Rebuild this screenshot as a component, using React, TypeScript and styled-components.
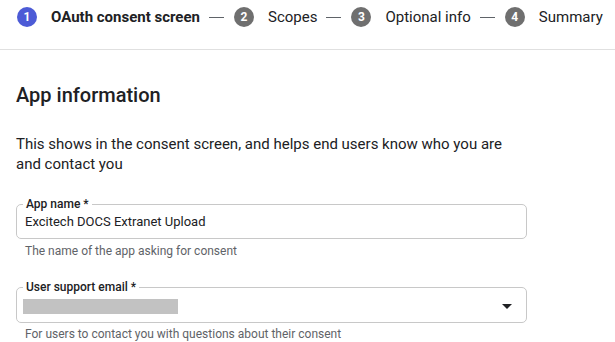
import React from "react";
import styled, { createGlobalStyle } from "styled-components";

const Global = createGlobalStyle`
  html, body { margin: 0; padding: 0; background: #fff; }
  body { font-family: Roboto, "Noto Sans", Arial, sans-serif; color: #202124; }
  * { box-sizing: border-box; }
`;

const Page = styled.div`
  width: 615px;
  height: 342px;
  overflow: hidden;
  background: #fff;
`;

const Stepper = styled.nav`
  display: flex;
  align-items: center;
  height: 50px;
  padding: 7px 0 22px 17px;
  border-bottom: 1px solid #e0e0e0;
`;

const Step = styled.div`
  display: flex;
  align-items: center;
  gap: 14px;
  height: 20px;
`;

const StepNum = styled.span<{ $active?: boolean }>`
  width: 20px;
  height: 20px;
  border-radius: 50%;
  background: ${(p) => (p.$active ? "#4c5bd6" : "#6f6f6f")};
  color: #fff;
  font-size: 12px;
  font-weight: 700;
  display: flex;
  align-items: center;
  justify-content: center;
  line-height: 1;
`;

const StepLabel = styled.span<{ $active?: boolean }>`
  font-size: 15px;
  line-height: 20px;
  font-weight: ${(p) => (p.$active ? 700 : 400)};
  color: #202124;
  white-space: nowrap;
`;

const Dash = styled.span`
  width: 15px;
  height: 1px;
  background: #5f6368;
  margin: 1px 10px 0 9px;
`;

const Content = styled.main`
  padding: 31px 16px 0 16px;
`;

const Heading = styled.h2`
  margin: 0;
  font-size: 20px;
  line-height: 28px;
  font-weight: 500;
  color: #202124;
`;

const Description = styled.p`
  margin: 25px 0 0 0;
  width: 511px;
  font-size: 15px;
  line-height: 20px;
  color: #202124;
`;

const Field = styled.div<{ $top: number }>`
  margin-top: ${(p) => p.$top}px;
  width: 511px;
`;

const Outline = styled.fieldset`
  margin: 0;
  padding: 0 8px 6px 6px;
  border: 1px solid #c8c8c8;
  border-radius: 5px;
`;

const Legend = styled.legend`
  padding: 0 3px;
  font-size: 12px;
  line-height: 16px;
  font-weight: 500;
  color: #202124;
`;

const Value = styled.div`
  padding-left: 2px;
  font-size: 13px;
  line-height: 20px;
  color: #202124;
  height: 20px;
`;

const SelectRow = styled.div`
  display: flex;
  align-items: center;
  justify-content: space-between;
  height: 20px;
  margin-top: 1px;
  padding-right: 6px;
`;

const Redacted = styled.div`
  width: 155px;
  height: 15px;
  background: #c2c2c2;
`;

const Arrow = styled.span`
  width: 0;
  height: 0;
  border-left: 5px solid transparent;
  border-right: 5px solid transparent;
  border-top: 5px solid #202124;
  margin-top: 1px;
`;

const Helper = styled.div<{ $gap: number }>`
  margin-top: ${(p) => p.$gap}px;
  padding-left: 9px;
  font-size: 12px;
  line-height: 16px;
  color: #5f6368;
`;

const steps = ["OAuth consent screen", "Scopes", "Optional info", "Summary"];

export default function App() {
  return (
    <Page>
      <Global />
      <Stepper>
        {steps.map((s, i) => (
          <React.Fragment key={s}>
            {i > 0 && <Dash />}
            <Step>
              <StepNum $active={i === 0}>{i + 1}</StepNum>
              <StepLabel $active={i === 0}>{s}</StepLabel>
            </Step>
          </React.Fragment>
        ))}
      </Stepper>
      <Content>
        <Heading>App information</Heading>
        <Description>
          This shows in the consent screen, and helps end users know who you are
          and contact you
        </Description>
        <Field $top={22}>
          <Outline>
            <Legend>App name *</Legend>
            <Value>Excitech DOCS Extranet Upload</Value>
          </Outline>
          <Helper $gap={4}>The name of the app asking for consent</Helper>
        </Field>
        <Field $top={20}>
          <Outline>
            <Legend>User support email *</Legend>
            <SelectRow>
              <Redacted />
              <Arrow />
            </SelectRow>
          </Outline>
          <Helper $gap={3}>For users to contact you with questions about their consent</Helper>
        </Field>
      </Content>
    </Page>
  );
}
